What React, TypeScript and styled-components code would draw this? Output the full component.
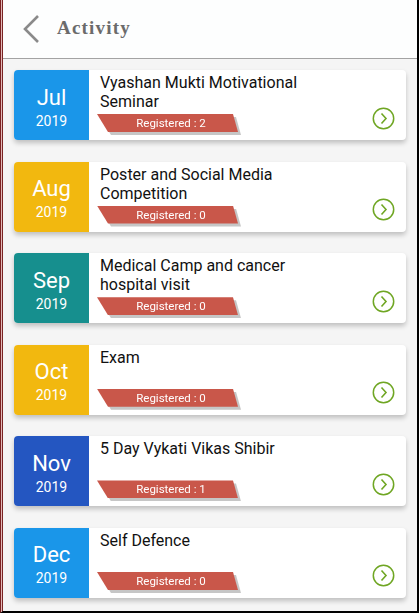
import React from "react";
import styled, { createGlobalStyle } from "styled-components";

const GlobalStyle = createGlobalStyle`
  html, body {
    margin: 0;
    padding: 0;
    background: #f5f5f5;
  }
  * {
    box-sizing: border-box;
  }
`;

const Frame = styled.div`
  width: 419px;
  height: 613px;
  overflow: hidden;
  background: #e3b9b9;
  border-left: 3px double #7a2323;
  border-right: 2px solid #000;
  border-bottom: 2px solid #000;
  display: flex;
  flex-direction: column;
  font-family: Roboto, "Liberation Sans", sans-serif;
`;

const Screen = styled.div`
  flex: 1;
  background: #f5f5f5;
  display: flex;
  flex-direction: column;
`;

const Header = styled.div`
  height: 59px;
  flex-shrink: 0;
  display: flex;
  align-items: center;
  background: #fdfefe;
  border-bottom: 1px solid #a3a3a3;
  padding-left: 19px;
`;

const BackButton = styled.button`
  border: none;
  background: transparent;
  padding: 0;
  display: flex;
  align-items: center;
  margin-right: 17px;
`;

const Title = styled.h1`
  margin: 0;
  font-family: "Liberation Serif", "DejaVu Serif", serif;
  font-weight: bold;
  font-size: 19px;
  letter-spacing: 1.2px;
  color: #6b6b6b;
  padding-bottom: 3px;
`;

const List = styled.div`
  display: flex;
  flex-direction: column;
  gap: 21.6px;
  padding: 11px 11px;
`;

const Card = styled.div`
  display: flex;
  height: 70px;
  background: #fff;
  border-radius: 4px;
  box-shadow: 0 3px 5px rgba(0, 0, 0, 0.22);
`;

const DateBlock = styled.div<{ $color: string }>`
  width: 75px;
  flex-shrink: 0;
  background: ${p => p.$color};
  border-radius: 4px 0 0 4px;
  color: #fff;
  display: flex;
  flex-direction: column;
  align-items: center;
  justify-content: center;
  padding-top: 3px;
`;

const Month = styled.div`
  font-size: 22px;
  line-height: 28px;
`;

const Year = styled.div`
  font-size: 14px;
  line-height: 18px;
`;

const Body = styled.div`
  flex: 1;
  display: flex;
  flex-direction: column;
  padding: 3px 0 8px 8px;
`;

const EventName = styled.div`
  font-size: 16px;
  line-height: 19px;
  color: #111;
  padding-left: 3px;
  width: 225px;
`;

const Footer = styled.div`
  margin-top: auto;
  height: 18px;
  display: flex;
  align-items: center;
  justify-content: space-between;
  padding-right: 11px;
`;

const RibbonShadow = styled.div`
  filter: drop-shadow(3px 3px 0 #c6c6c6);
`;

const Ribbon = styled.div`
  width: 141px;
  height: 18px;
  background: #c9574a;
  color: #fff;
  font-size: 11.5px;
  line-height: 18px;
  text-align: center;
  padding-left: 7px;
  clip-path: polygon(0 0, 136px 0, 141px 18px, 11px 18px);
`;

const GoButton = styled.button`
  border: none;
  background: transparent;
  padding: 0;
  display: flex;
  margin-top: -10px;
`;

type Activity = {
  month: string;
  year: string;
  name: string;
  registered: number;
  color: string;
};

const activities: Activity[] = [
  { month: "Jul", year: "2019", name: "Vyashan Mukti Motivational Seminar", registered: 2, color: "#1a96e9" },
  { month: "Aug", year: "2019", name: "Poster and Social Media Competition", registered: 0, color: "#f2b80f" },
  { month: "Sep", year: "2019", name: "Medical Camp and cancer hospital visit", registered: 0, color: "#168f8e" },
  { month: "Oct", year: "2019", name: "Exam", registered: 0, color: "#f2b80f" },
  { month: "Nov", year: "2019", name: "5 Day Vykati Vikas Shibir", registered: 1, color: "#2456c1" },
  { month: "Dec", year: "2019", name: "Self Defence", registered: 0, color: "#1a96e9" },
];

const ChevronBack = () => (
  <svg width="18" height="30" viewBox="0 0 18 30">
    <path d="M16 2 L3 15 L16 28" fill="none" stroke="#8a8a8a" strokeWidth="2.6" />
  </svg>
);

const CircleArrow = () => (
  <svg width="23" height="23" viewBox="0 0 23 23">
    <circle cx="11.5" cy="11.5" r="10.2" fill="none" stroke="#6fa623" strokeWidth="1.5" />
    <path d="M9.5 6.5 L14 11.5 L9.5 16.5" fill="none" stroke="#6fa623" strokeWidth="1.6" />
  </svg>
);

const App: React.FC = () => {
  return (
    <Frame>
      <GlobalStyle />
      <Screen>
        <Header>
          <BackButton>
            <ChevronBack />
          </BackButton>
          <Title>Activity</Title>
        </Header>
        <List>
          {activities.map(a => (
            <Card key={a.month}>
              <DateBlock $color={a.color}>
                <Month>{a.month}</Month>
                <Year>{a.year}</Year>
              </DateBlock>
              <Body>
                <EventName>{a.name}</EventName>
                <Footer>
                  <RibbonShadow>
                    <Ribbon>Registered : {a.registered}</Ribbon>
                  </RibbonShadow>
                  <GoButton>
                    <CircleArrow />
                  </GoButton>
                </Footer>
              </Body>
            </Card>
          ))}
        </List>
      </Screen>
    </Frame>
  );
};

export default App;
